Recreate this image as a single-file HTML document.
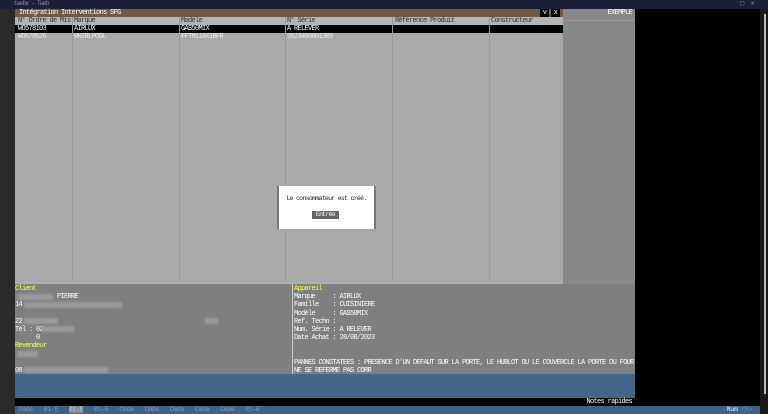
<html><head><style>
body{margin:0;width:768px;height:414px;background:#000;position:relative;overflow:hidden;font-family:"Liberation Mono",monospace;font-size:7px;letter-spacing:-0.7px;color:#fff;line-height:8px}
div{position:absolute;box-sizing:border-box;white-space:pre}
.c{border-left:1px solid #999;top:17px;height:265px}
.blur{background:#9a9a9a;height:6px;filter:blur(1px)}
.y{color:#ff5}
</style></head><body>
<div style="left:0;top:0;width:768px;height:9px;background:#1b2038;color:#889;font-size:6px;padding-left:8px">  twebv - Tweb</div>
<div style="left:740px;top:0;width:20px;height:9px;color:#889;font-size:7px">▢  ✕</div>
<div style="left:0;top:9px;width:15px;height:405px;background:#2a2a2a"></div>
<div style="left:15px;top:9px;width:548px;height:8px;background:#6e5a46;padding-left:4px">Intégration Interventions SFG</div>
<div style="left:540px;top:9px;width:9px;height:8px;background:#000;text-align:center">v</div>
<div style="left:551px;top:9px;width:9px;height:8px;background:#000;text-align:center">x</div>
<div style="left:15px;top:17px;width:548px;height:265px;background:#a9a9a9"></div>
<div style="left:15px;top:17px;width:548px;height:8px;background:#b4b4b4"></div>
<div style="left:15px;top:25px;width:548px;height:8px;background:#000"></div>
<div style="left:18px;top:17px;color:#333">N° Ordre de Mis</div>
<div style="left:74px;top:17px;color:#333">Marque</div>
<div style="left:181px;top:17px;color:#333">Modèle</div>
<div style="left:287px;top:17px;color:#333">N° Série</div>
<div style="left:395px;top:17px;color:#333">Référence Produit</div>
<div style="left:491px;top:17px;color:#333">Constructeur</div>
<div style="left:18px;top:25px">WO578103</div>
<div style="left:74px;top:25px">AIRLUX</div>
<div style="left:181px;top:25px">GAS50MIX</div>
<div style="left:287px;top:25px">A RELEVER</div>
<div style="left:18px;top:33px;color:#eee">WO578526</div>
<div style="left:74px;top:33px;color:#eee">WHIRLPOOL</div>
<div style="left:181px;top:33px;color:#eee">FFTM118X1BFR</div>
<div style="left:287px;top:33px;color:#eee">5523460001305</div>
<div class="c" style="left:72px"></div><div class="c" style="left:179px"></div><div class="c" style="left:285px"></div><div class="c" style="left:392px"></div><div class="c" style="left:489px"></div>
<div style="left:563px;top:9px;width:72px;height:275px;background:#888"></div>
<div style="left:563px;top:9px;width:72px;height:12px;border-bottom:1px solid #999;text-align:right;padding-right:3px">EXEMPLE</div>
<div style="left:15px;top:282px;width:548px;height:2px;background:#b0b0b0"></div>
<div style="left:760px;top:9px;width:8px;height:405px;background:#1a1a1a"></div>
<div style="left:764px;top:14px;width:2px;height:380px;background:#bbb"></div>
<div style="left:277px;top:186px;width:99px;height:43px;background:#fff;border-left:2px solid #777;border-right:2px solid #777;color:#222;text-align:center;padding-top:9px;font-size:6.5px">Le consommateur est créé.</div>
<div style="left:312px;top:211px;width:27px;height:8px;background:#666;color:#fff;text-align:center;font-size:6.5px">Entrée</div>
<div style="left:15px;top:284px;width:620px;height:90px;background:#7f7f7f"></div>
<div style="left:292px;top:284px;width:1px;height:90px;background:#ccc"></div>
<div style="left:15px;top:285px;line-height:8.2px"><span class="y">Client</span>
 
14
 
22
Tél : 02
 
<span class="y">Revendeur</span>
 
 
08</div>
<div style="left:57px;top:293px">PIERRE</div>
<div style="left:36px;top:334px">0</div>
<div class="blur" style="left:17px;top:294px;width:36px"></div>
<div class="blur" style="left:24px;top:302px;width:98px"></div>
<div class="blur" style="left:24px;top:318px;width:34px"></div>
<div class="blur" style="left:205px;top:318px;width:13px"></div>
<div class="blur" style="left:42px;top:326px;width:32px"></div>
<div class="blur" style="left:17px;top:351px;width:21px"></div>
<div class="blur" style="left:24px;top:367px;width:84px"></div>
<div style="left:294px;top:285px;line-height:8.2px"><span class="y">Appareil</span>
Marque     : AIRLUX
Famille    : CUISINIERE
Modèle     : GAS50MIX
Ref. Techn :
Num. Série : A RELEVER
Date Achat : 28/08/2023
 
 
PANNES CONSTATEES : PRESENCE D'UN DEFAUT SUR LA PORTE, LE HUBLOT OU LE COUVERCLE LA PORTE DU FOUR
NE SE REFERME PAS CORR</div>
<div style="left:15px;top:374px;width:620px;height:24px;background:#43668a"></div>
<div style="left:15px;top:398px;width:620px;height:8px;background:#000;text-align:right;padding-right:3px">Notes rapides</div>
<div style="left:15px;top:406px;width:745px;height:8px;background:#3f6288;color:#8aa0b8;font-size:6px;letter-spacing:0"> Cmde   01-E   <span style="background:#889;color:#bcc">01-E</span>   01-E   Cmde   Cmde   Cmde   Cmde   Cmde   01-E</div>
<div style="left:727px;top:406px;width:33px;height:8px;font-size:6px;letter-spacing:0">Num <span style="color:#789">&lt;S&gt;</span></div>
</body></html>
